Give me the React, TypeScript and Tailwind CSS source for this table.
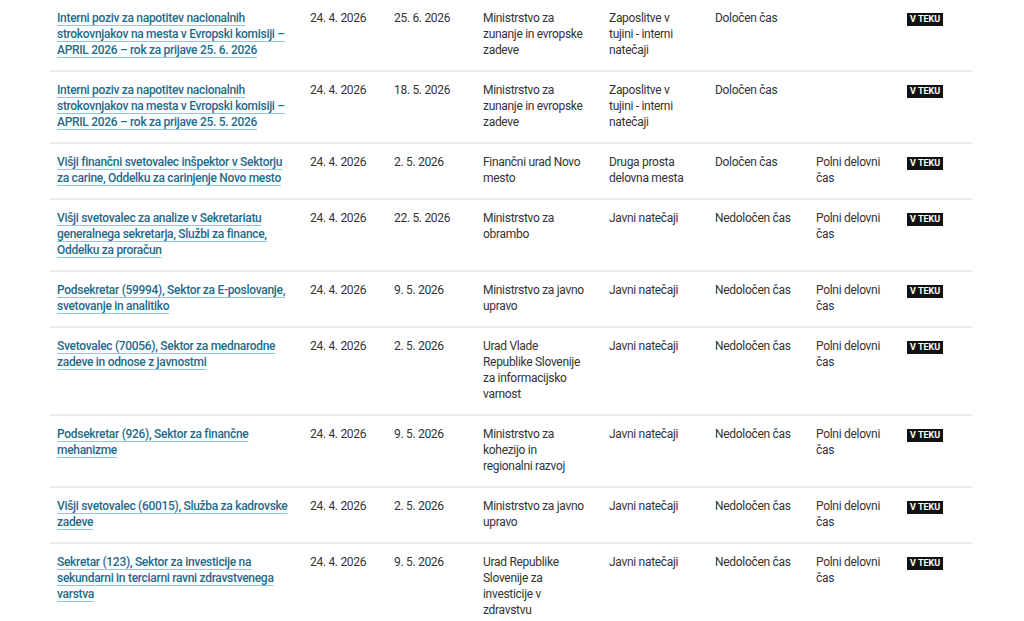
import { Fragment } from "react";

type Row = {
  title: string[];
  from: string;
  to: string;
  org: string[];
  type: string[];
  duration: string;
  hours: string[];
};

const abroad = ["Zaposlitve v", "tujini - interni", "natečaji"];
const full = ["Polni delovni", "čas"];

const rows: Row[] = [
  {
    title: ["Interni poziv za napotitev nacionalnih", "strokovnjakov na mesta v Evropski komisiji –", "APRIL 2026 – rok za prijave 25. 6. 2026"],
    from: "24. 4. 2026",
    to: "25. 6. 2026",
    org: ["Ministrstvo za", "zunanje in evropske", "zadeve"],
    type: abroad,
    duration: "Določen čas",
    hours: [],
  },
  {
    title: ["Interni poziv za napotitev nacionalnih", "strokovnjakov na mesta v Evropski komisiji –", "APRIL 2026 – rok za prijave 25. 5. 2026"],
    from: "24. 4. 2026",
    to: "18. 5. 2026",
    org: ["Ministrstvo za", "zunanje in evropske", "zadeve"],
    type: abroad,
    duration: "Določen čas",
    hours: [],
  },
  {
    title: ["Višji finančni svetovalec inšpektor v Sektorju", "za carine, Oddelku za carinjenje Novo mesto"],
    from: "24. 4. 2026",
    to: "2. 5. 2026",
    org: ["Finančni urad Novo", "mesto"],
    type: ["Druga prosta", "delovna mesta"],
    duration: "Določen čas",
    hours: full,
  },
  {
    title: ["Višji svetovalec za analize v Sekretariatu", "generalnega sekretarja, Službi za finance,", "Oddelku za proračun"],
    from: "24. 4. 2026",
    to: "22. 5. 2026",
    org: ["Ministrstvo za", "obrambo"],
    type: ["Javni natečaji"],
    duration: "Nedoločen čas",
    hours: full,
  },
  {
    title: ["Podsekretar (59994), Sektor za E-poslovanje,", "svetovanje in analitiko"],
    from: "24. 4. 2026",
    to: "9. 5. 2026",
    org: ["Ministrstvo za javno", "upravo"],
    type: ["Javni natečaji"],
    duration: "Nedoločen čas",
    hours: full,
  },
  {
    title: ["Svetovalec (70056), Sektor za mednarodne", "zadeve in odnose z javnostmi"],
    from: "24. 4. 2026",
    to: "2. 5. 2026",
    org: ["Urad Vlade", "Republike Slovenije", "za informacijsko", "varnost"],
    type: ["Javni natečaji"],
    duration: "Nedoločen čas",
    hours: full,
  },
  {
    title: ["Podsekretar (926), Sektor za finančne", "mehanizme"],
    from: "24. 4. 2026",
    to: "9. 5. 2026",
    org: ["Ministrstvo za", "kohezijo in", "regionalni razvoj"],
    type: ["Javni natečaji"],
    duration: "Nedoločen čas",
    hours: full,
  },
  {
    title: ["Višji svetovalec (60015), Služba za kadrovske", "zadeve"],
    from: "24. 4. 2026",
    to: "2. 5. 2026",
    org: ["Ministrstvo za javno", "upravo"],
    type: ["Javni natečaji"],
    duration: "Nedoločen čas",
    hours: full,
  },
  {
    title: ["Sekretar (123), Sektor za investicije na", "sekundarni in terciarni ravni zdravstvenega", "varstva"],
    from: "24. 4. 2026",
    to: "9. 5. 2026",
    org: ["Urad Republike", "Slovenije za", "investicije v", "zdravstvu"],
    type: ["Javni natečaji"],
    duration: "Nedoločen čas",
    hours: full,
  },
];

function Lines({ lines }: { lines: string[] }) {
  return (
    <>
      {lines.map((l, i) => (
        <Fragment key={i}>
          {i > 0 && <br />}
          <span className="whitespace-nowrap">{l}</span>
        </Fragment>
      ))}
    </>
  );
}

export default function App() {
  return (
    <div className="min-h-screen bg-white font-['Roboto',sans-serif] text-[12px] leading-4 tracking-[-0.3px] text-[#333]">
      <div className="mx-[50px] w-[922px]">
        {rows.map((r, i) => (
          <div
            key={i}
            className={
              "grid grid-cols-[253px_84px_89px_126px_106px_101px_91px_72px] pt-[10px] pb-3 " +
              (i < rows.length - 1 ? "border-b-2 border-[#ececec]" : "")
            }
          >
            <div className="pl-[7px]">
              <a
                href="#"
                className="font-medium text-[#1f6b8a] underline decoration-[#86cbe4] underline-offset-[3px]"
              >
                <Lines lines={r.title} />
              </a>
            </div>
            <div className="px-[7px]">{r.from}</div>
            <div className="px-[7px]">{r.to}</div>
            <div className="px-[7px]">
              <Lines lines={r.org} />
            </div>
            <div className="px-[7px]">
              <Lines lines={r.type} />
            </div>
            <div className="px-[7px]">{r.duration}</div>
            <div className="px-[7px]">
              <Lines lines={r.hours} />
            </div>
            <div className="px-[7px]">
              <span className="mt-px inline-block bg-[#111] px-[3px] text-[9px] font-bold leading-[13px] tracking-normal text-white">
                V TEKU
              </span>
            </div>
          </div>
        ))}
      </div>
    </div>
  );
}
